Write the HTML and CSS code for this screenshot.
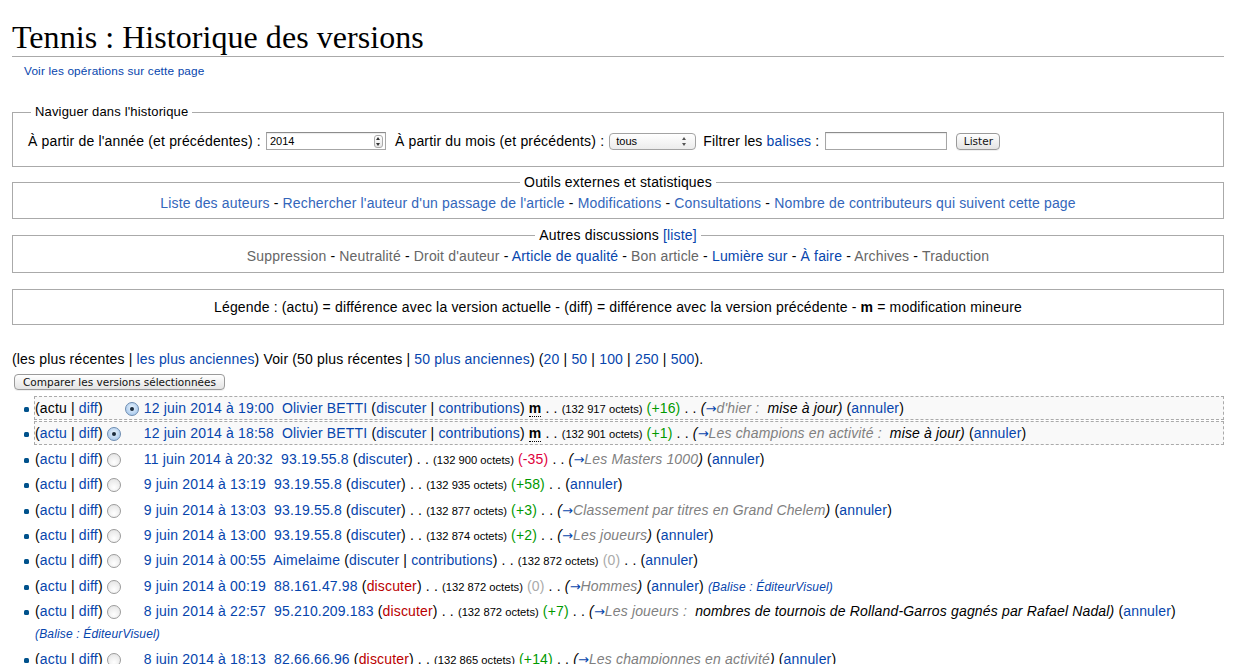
FILE: index.html
```html
<!DOCTYPE html>
<html lang="fr">
<head>
<meta charset="utf-8">
<title>Tennis : Historique des versions</title>
<link rel="stylesheet" href="styles.css">
</head>
<body>
<div class="page">
  <h1 class="first-heading">Tennis : Historique des versions</h1>
  <div class="content-sub"><a href="#">Voir les opérations sur cette page</a></div>

  <fieldset class="nav-box">
    <legend>Naviguer dans l'historique</legend>
    <div class="nav-row">
      <span class="lbl">À partir de l'année (et précédentes) :</span>
      <span class="num-input">2014<span class="spin"><span class="up"></span><span class="down"></span></span></span>
      <span class="lbl">À partir du mois (et précédents) :</span>
      <span class="select">tous<span class="sel-arrows"><span class="up"></span><span class="down"></span></span></span>
      <span class="lbl">Filtrer les <a href="#">balises</a> :</span>
      <span class="text-input"></span>
      <span class="btn btn-lister">Lister</span>
    </div>
  </fieldset>

  <fieldset class="info-box">
    <legend>Outils externes et statistiques</legend>
    <div class="info-row ext">
      <a href="#">Liste des auteurs</a> - <a href="#">Rechercher l'auteur d'un passage de l'article</a> - <a href="#">Modifications</a> - <a href="#">Consultations</a> - <a href="#">Nombre de contributeurs qui suivent cette page</a>
    </div>
  </fieldset>

  <fieldset class="info-box">
    <legend>Autres discussions <a href="#">[liste]</a></legend>
    <div class="info-row disc">
      <span class="gray">Suppression</span> - <span class="gray">Neutralité</span> - <span class="gray">Droit d'auteur</span> - <a href="#">Article de qualité</a> - <span class="gray">Bon article</span> - <a href="#">Lumière sur</a> - <a href="#">À faire</a> - <span class="gray">Archives</span> - <span class="gray">Traduction</span>
    </div>
  </fieldset>

  <div class="legend-box">
    Légende : (actu) = différence avec la version actuelle - (diff) = différence avec la version précédente - <b>m</b> = modification mineure
  </div>

  <div class="nav-links">
    (les plus récentes | <a href="#">les plus anciennes</a>) Voir (50 plus récentes | <a href="#">50 plus anciennes</a>) (<a href="#">20</a> | <a href="#">50</a> | <a href="#">100</a> | <a href="#">250</a> | <a href="#">500</a>).
  </div>

  <div class="compare-row"><span class="btn btn-compare">Comparer les versions sélectionnées</span></div>

  <ul class="history">
    <li class="selected">(actu | <a href="#">diff</a>)<span class="radio hidden"></span><span class="radio checked"></span> <a href="#" class="date">12 juin 2014 à 19:00</a>&nbsp; <a href="#">Olivier BETTI</a> (<a href="#">discuter</a> | <a href="#">contributions</a>) <abbr class="minor">m</abbr> <span class="sep">. .</span> <span class="size">(132 917 octets)</span> <span class="pos">(+16)</span> <span class="sep">. .</span> <span class="comment">(<a href="#" class="arrow">→</a><span class="auto">d'hier :</span>&nbsp; mise à jour)</span> (<a href="#">annuler</a>)</li>
    <li class="selected">(<a href="#">actu</a> | <a href="#">diff</a>)<span class="radio checked"></span><span class="radio hidden"></span> <a href="#" class="date">12 juin 2014 à 18:58</a>&nbsp; <a href="#">Olivier BETTI</a> (<a href="#">discuter</a> | <a href="#">contributions</a>) <abbr class="minor">m</abbr> <span class="sep">. .</span> <span class="size">(132 901 octets)</span> <span class="pos">(+1)</span> <span class="sep">. .</span> <span class="comment">(<a href="#" class="arrow">→</a><span class="auto">Les champions en activité :</span>&nbsp; mise à jour)</span> (<a href="#">annuler</a>)</li>
    <li>(<a href="#">actu</a> | <a href="#">diff</a>)<span class="radio"></span><span class="radio hidden"></span> <a href="#" class="date">11 juin 2014 à 20:32</a>&nbsp; <a href="#">93.19.55.8</a> (<a href="#">discuter</a>) <span class="sep">. .</span> <span class="size">(132 900 octets)</span> <span class="neg">(-35)</span> <span class="sep">. .</span> <span class="comment">(<a href="#" class="arrow">→</a><span class="auto">Les Masters 1000</span>)</span> (<a href="#">annuler</a>)</li>
    <li>(<a href="#">actu</a> | <a href="#">diff</a>)<span class="radio"></span><span class="radio hidden"></span> <a href="#" class="date">9 juin 2014 à 13:19</a>&nbsp; <a href="#">93.19.55.8</a> (<a href="#">discuter</a>) <span class="sep">. .</span> <span class="size">(132 935 octets)</span> <span class="pos">(+58)</span> <span class="sep">. .</span> (<a href="#">annuler</a>)</li>
    <li>(<a href="#">actu</a> | <a href="#">diff</a>)<span class="radio"></span><span class="radio hidden"></span> <a href="#" class="date">9 juin 2014 à 13:03</a>&nbsp; <a href="#">93.19.55.8</a> (<a href="#">discuter</a>) <span class="sep">. .</span> <span class="size">(132 877 octets)</span> <span class="pos">(+3)</span> <span class="sep">. .</span> <span class="comment">(<a href="#" class="arrow">→</a><span class="auto">Classement par titres en Grand Chelem</span>)</span> (<a href="#">annuler</a>)</li>
    <li>(<a href="#">actu</a> | <a href="#">diff</a>)<span class="radio"></span><span class="radio hidden"></span> <a href="#" class="date">9 juin 2014 à 13:00</a>&nbsp; <a href="#">93.19.55.8</a> (<a href="#">discuter</a>) <span class="sep">. .</span> <span class="size">(132 874 octets)</span> <span class="pos">(+2)</span> <span class="sep">. .</span> <span class="comment">(<a href="#" class="arrow">→</a><span class="auto">Les joueurs</span>)</span> (<a href="#">annuler</a>)</li>
    <li>(<a href="#">actu</a> | <a href="#">diff</a>)<span class="radio"></span><span class="radio hidden"></span> <a href="#" class="date">9 juin 2014 à 00:55</a>&nbsp; <a href="#">Aimelaime</a> (<a href="#">discuter</a> | <a href="#">contributions</a>) <span class="sep">. .</span> <span class="size">(132 872 octets)</span> <span class="null">(0)</span> <span class="sep">. .</span> (<a href="#">annuler</a>)</li>
    <li>(<a href="#">actu</a> | <a href="#">diff</a>)<span class="radio"></span><span class="radio hidden"></span> <a href="#" class="date">9 juin 2014 à 00:19</a>&nbsp; <a href="#">88.161.47.98</a> (<a href="#" class="new">discuter</a>) <span class="sep">. .</span> <span class="size">(132 872 octets)</span> <span class="null">(0)</span> <span class="sep">. .</span> <span class="comment">(<a href="#" class="arrow">→</a><span class="auto">Hommes</span>)</span> (<a href="#">annuler</a>) <span class="tags">(<a href="#">Balise</a> : ÉditeurVisuel)</span></li>
    <li>(<a href="#">actu</a> | <a href="#">diff</a>)<span class="radio"></span><span class="radio hidden"></span> <a href="#" class="date">8 juin 2014 à 22:57</a>&nbsp; <a href="#">95.210.209.183</a> (<a href="#" class="new">discuter</a>) <span class="sep">. .</span> <span class="size">(132 872 octets)</span> <span class="pos">(+7)</span> <span class="sep">. .</span> <span class="comment">(<a href="#" class="arrow">→</a><span class="auto">Les joueurs :</span>&nbsp; nombres de tournois de Rolland-Garros gagnés par Rafael Nadal)</span> (<a href="#">annuler</a>) <span class="tags">(<a href="#">Balise</a> : ÉditeurVisuel)</span></li>
    <li>(<a href="#">actu</a> | <a href="#">diff</a>)<span class="radio"></span><span class="radio hidden"></span> <a href="#" class="date">8 juin 2014 à 18:13</a>&nbsp; <a href="#">82.66.66.96</a> (<a href="#" class="new">discuter</a>) <span class="sep">. .</span> <span class="size">(132 865 octets)</span> <span class="pos">(+14)</span> <span class="sep">. .</span> <span class="comment">(<a href="#" class="arrow">→</a><span class="auto">Les championnes en activité</span>)</span> (<a href="#">annuler</a>)</li>
  </ul>
</div>
</body>
</html>
```
FILE: styles.css
```css
html, body {
  margin: 0;
  padding: 0;
  background: #fff;
}
body {
  color: #000;
  font-family: "Liberation Sans", Arial, Helvetica, sans-serif;
  font-size: 14px;
  letter-spacing: 0.16px;
}
a {
  color: #0645ad;
  text-decoration: none;
}
a.new {
  color: #ba0000;
}
.page {
  padding: 19px 13px 0 12px;
}
.first-heading {
  margin: 0;
  font-family: "Liberation Serif", "Times New Roman", serif;
  font-weight: normal;
  font-size: 32px;
  line-height: 37px;
  letter-spacing: 0.05px;
  border-bottom: 1px solid #aaa;
}
.content-sub {
  margin: 6px 0 0 12px;
  font-size: 11.8px;
  line-height: 16px;
}

/* boxes */
fieldset {
  margin: 0;
  border: 1px solid #aaa;
  min-width: 0;
}
.nav-box {
  margin-top: 25px;
  padding: 11px 10px 15px 15px;
}
.nav-box legend {
  font-size: 13px;
  line-height: 16px;
  padding: 0 4px;
  margin-left: 3px;
}
.nav-row {
  display: flex;
  align-items: center;
  height: 20px;
  white-space: nowrap;
}
.lbl {
  line-height: 20px;
}
.num-input {
  position: relative;
  box-sizing: border-box;
  width: 120px;
  height: 18px;
  margin: 0 9px 0 5px;
  border: 1px solid #a6a6a6;
  border-top-color: #8c8c8c;
  font-size: 11px;
  line-height: 16px;
  padding-left: 3px;
  letter-spacing: 0;
  box-shadow: inset 0 1px 1px rgba(0,0,0,0.08);
}
.spin {
  position: absolute;
  right: 2px;
  top: 2px;
  width: 7px;
  height: 11px;
  border: 1px solid #aaa;
  border-radius: 3px;
  background: linear-gradient(#fff, #e6e6e6);
}
.spin .up, .spin .down, .sel-arrows .up, .sel-arrows .down {
  position: absolute;
  left: 1px;
  width: 0;
  height: 0;
  border-left: 2.5px solid transparent;
  border-right: 2.5px solid transparent;
}
.spin .up {
  top: 1px;
  border-bottom: 3px solid #333;
}
.spin .down {
  bottom: 1px;
  border-top: 3px solid #333;
}
.select {
  position: relative;
  box-sizing: border-box;
  width: 87px;
  height: 17px;
  margin: 0 7px 0 5px;
  border: 1px solid #a3a3a3;
  border-radius: 4px;
  background: linear-gradient(#ffffff, #ececec);
  font-size: 11px;
  line-height: 15px;
  padding-left: 6px;
  letter-spacing: 0;
}
.sel-arrows {
  position: absolute;
  right: 7px;
  top: 3px;
  width: 7px;
  height: 9px;
}
.sel-arrows .up, .sel-arrows .down {
  border-left-width: 2px;
  border-right-width: 2px;
  left: 1px;
}
.sel-arrows .up { border-bottom: 3px solid #555; top: 0; }
.sel-arrows .down { border-top: 3px solid #555; bottom: 0; }
.text-input {
  box-sizing: border-box;
  width: 122px;
  height: 18px;
  margin: 0 9px 0 6px;
  border: 1px solid #a6a6a6;
  border-top-color: #8c8c8c;
  box-shadow: inset 0 1px 1px rgba(0,0,0,0.08);
}
.btn {
  display: inline-block;
  box-sizing: border-box;
  border: 1px solid #9a9a9a;
  border-radius: 4px;
  background: linear-gradient(#ffffff, #f1f1f1 50%, #e4e4e4);
  font-family: "DejaVu Sans", "Liberation Sans", sans-serif;
  font-size: 10.5px;
  letter-spacing: 0;
  color: #111;
  text-align: center;
  box-shadow: 0 1px 0 rgba(0,0,0,0.06);
}
.btn-lister {
  width: 44px;
  height: 17px;
  line-height: 15px;
}
.info-box {
  margin-top: 7px;
  padding: 2px 10px 5px;
  text-align: center;
}
.info-box legend {
  margin: 0 auto;
  padding: 0 4px;
  line-height: 17px;
}
.info-box + .info-box {
  margin-top: 8px;
  padding-bottom: 6px;
}
.info-row {
  line-height: 20px;
}
.ext a {
  color: #3366bb;
}
.gray {
  color: #666;
}
.legend-box {
  margin-top: 16px;
  border: 1px solid #aaa;
  height: 34px;
  line-height: 34px;
  text-align: center;
}
.nav-links {
  margin-top: 24px;
  line-height: 20px;
}
.compare-row {
  margin-top: 4px;
  padding-left: 2px;
}
.btn-compare {
  width: 211px;
  height: 16px;
  line-height: 14px;
}

/* history list */
.history {
  list-style: none;
  margin: 6px 0 0 22px;
  padding: 0;
}
.history li {
  position: relative;
  line-height: 22px;
  border: 1px solid #fff;
  margin-bottom: 1.4px;
}
.history li::before {
  content: "";
  position: absolute;
  left: -11px;
  top: 10px;
  width: 5px;
  height: 5px;
  border-radius: 1.5px;
  background: #00528c;
}
.history li.selected {
  background: #f9f9f9;
  border: 1px dashed #aaa;
}
.radio {
  display: inline-block;
  box-sizing: border-box;
  width: 14px;
  height: 14px;
  margin: 0 0 0 4px;
  vertical-align: -3px;
  border: 1px solid #9b9b9b;
  border-radius: 50%;
  background: radial-gradient(circle at 50% 70%, #ffffff, #e8e8e8 75%);
  position: relative;
}
.radio.hidden {
  visibility: hidden;
}
.radio.checked {
  border-color: #6b8bb0;
  background: radial-gradient(circle at 50% 40%, #e8f3fd, #a9c9ec 80%);
}
.radio.checked::after {
  content: "";
  position: absolute;
  left: 4px;
  top: 4px;
  width: 4px;
  height: 4px;
  border-radius: 50%;
  background: #1b2b3c;
}
.date {
  margin-left: 1px;
}
.minor {
  font-weight: bold;
  text-decoration: none;
  border-bottom: 1px dotted #000;
  line-height: 14px;
}
.size {
  font-size: 11.2px;
  line-height: 14px;
  letter-spacing: 0;
}
.pos {
  color: #009900;
}
.neg {
  color: #e0003c;
}
.null {
  color: #aaa;
}
.comment {
  font-style: italic;
}
.arrow {
  font-family: "DejaVu Sans", sans-serif;
  font-style: normal;
  font-size: 13px;
  letter-spacing: 0;
  line-height: 14px;
}
.auto {
  color: #808080;
}
.tags {
  font-style: italic;
  font-size: 12px;
  line-height: 14px;
  white-space: nowrap;
  color: #0645ad;
}
.tags a {
  color: #0645ad;
}
```
